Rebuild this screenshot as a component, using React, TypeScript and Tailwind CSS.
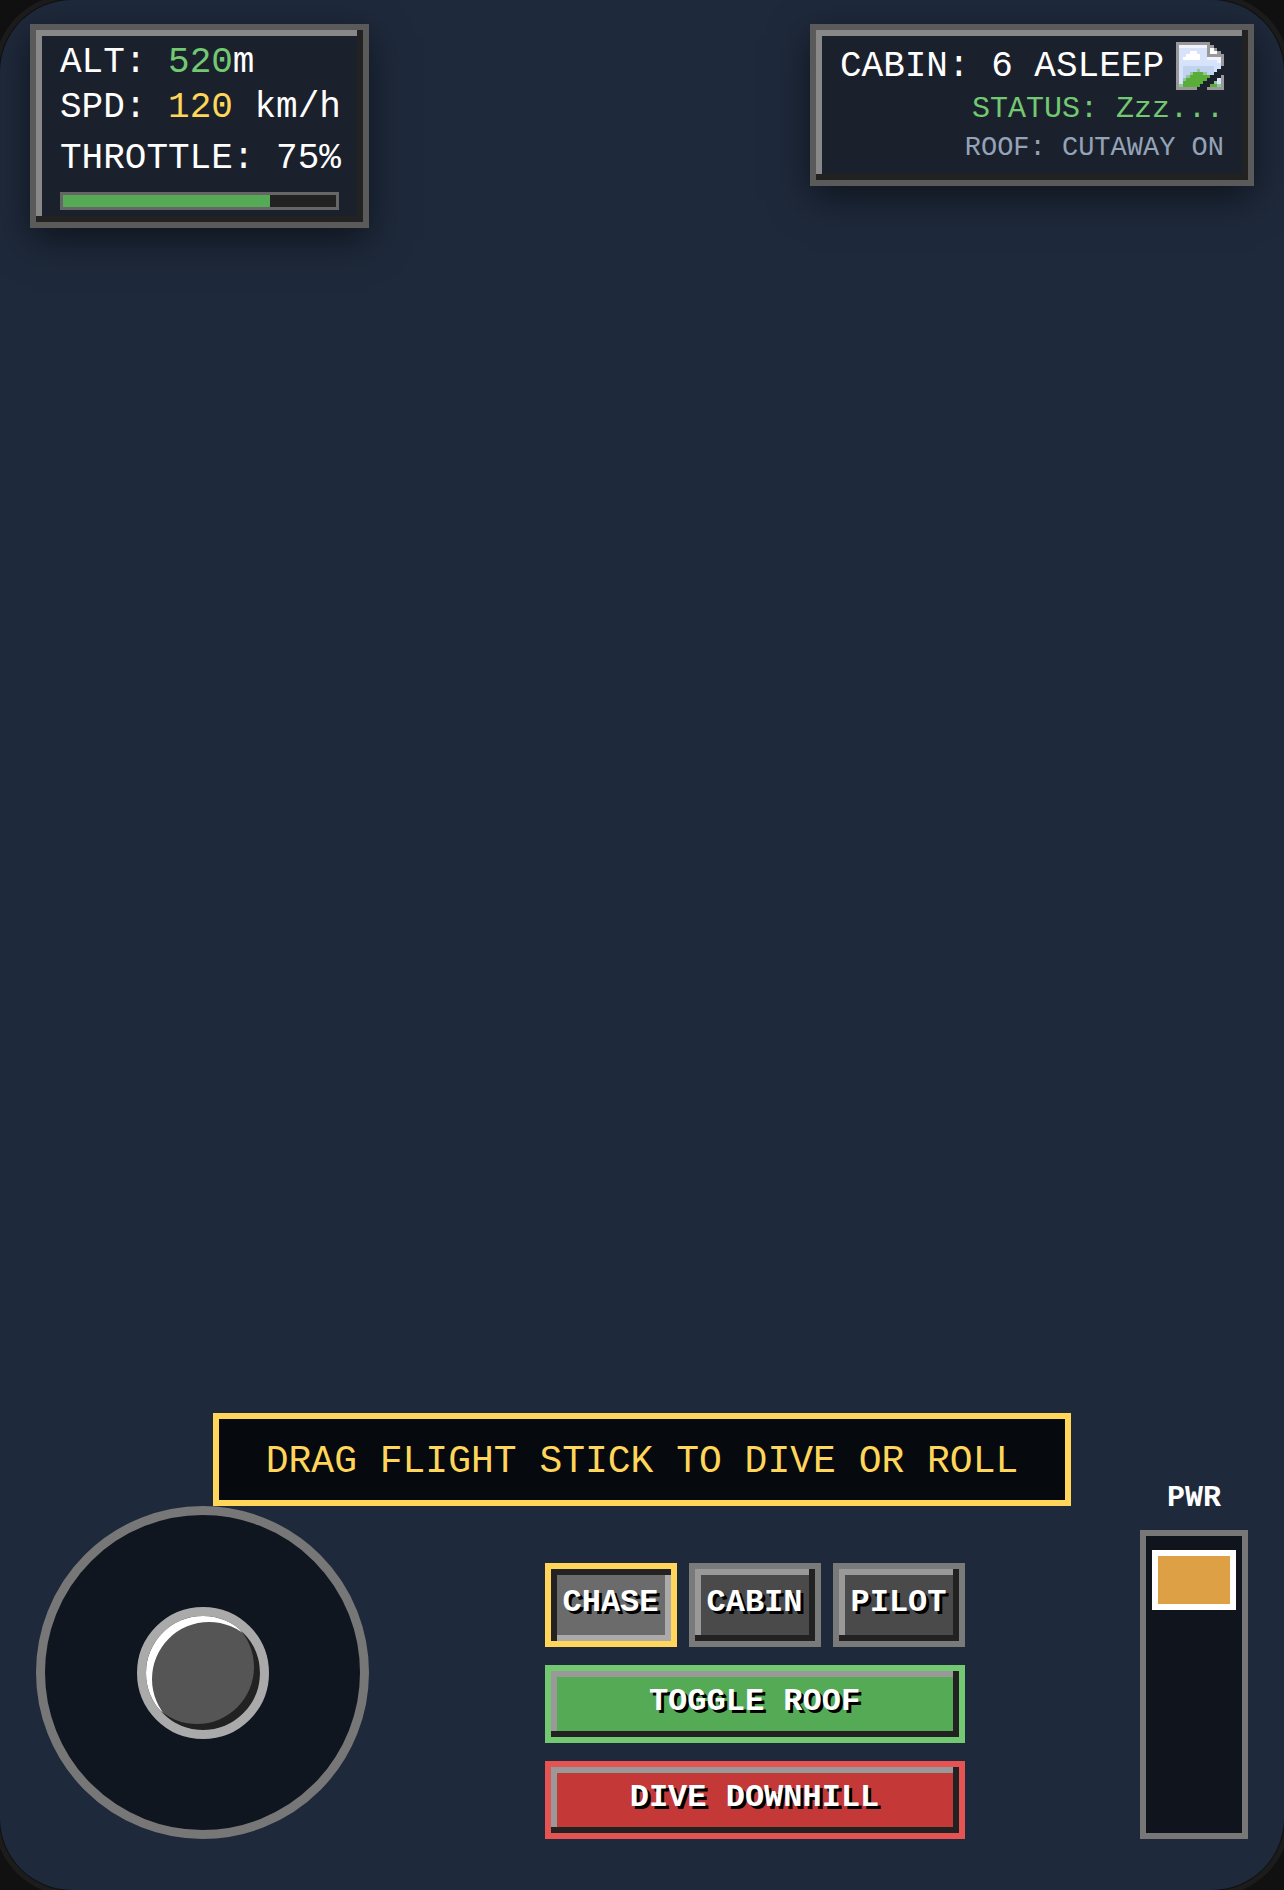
import { useState } from "react";

type View = "CHASE" | "CABIN" | "PILOT";

const VIEWS: View[] = ["CHASE", "CABIN", "PILOT"];

// Missing-picture sprite, one character per pixel (14 x 16).
const SPRITE = [
  "gggggggggg....",
  "gaaaaaaaagg...",
  "gbbbbbbbbgwg..",
  "gbbbwwbbbgwwg.",
  "gbbwwwwbbggggg",
  "gbwwwwwbbaaaag",
  "gbbbbbbbbbbbag",
  "gbbbbbbbbbbbbg",
  "gbcccccccccbb.",
  "gbcccclccccb..",
  "gbcclGGGlcc...",
  "gbclGGGGGG...g",
  "gblGGGGGG...bg",
  "gbGGGGGG...lbg",
  "glGGGGG...GGlg",
  "gggggg...ggggg"
];

const SPRITE_COLORS: Record<string, string> = {
  g: "#999999",
  w: "#ffffff",
  a: "#f0f4fe",
  b: "#d6e3fb",
  c: "#c2d3f1",
  G: "#5aad38",
  l: "#94c49a"
};

// The dark edge comes first so it wins in the corners.
const RAISED = "shadow-[inset_-6px_-6px_0_#222,inset_6px_6px_0_#999]";
const PRESSED = "shadow-[inset_6px_6px_0_#222,inset_-6px_-6px_0_#aaa]";
const PANEL =
  "border-[6px] border-[#5a5a5a] bg-[#1b212c] px-6 pb-3 text-[36px] leading-[45px] text-white whitespace-nowrap shadow-[inset_-6px_-6px_0_#222,inset_6px_6px_0_#888,0_12px_36px_rgba(0,0,0,0.5)]";
const BUTTON =
  "border-[6px] pb-1 text-[32px] leading-9 font-bold text-white [text-shadow:3px_3px_0_#000]";

function PassengerSprite() {
  return (
    <svg
      className="size-12"
      viewBox="0 0 14 16"
      preserveAspectRatio="none"
      shapeRendering="crispEdges"
      role="img"
      aria-label="Passengers"
    >
      {SPRITE.flatMap((row, y) =>
        row.split("").map((pixel, x) =>
          pixel === "." ? null : (
            <rect key={`${x}-${y}`} x={x} y={y} width={1} height={1} fill={SPRITE_COLORS[pixel]} />
          )
        )
      )}
    </svg>
  );
}

function FlightPanel({ throttle, fill }: { throttle: number; fill: number }) {
  return (
    <section className={`${PANEL} w-[339px] pt-[10px]`}>
      <p>
        ALT: <span className="text-[#72c972]">520</span>m
      </p>
      <p>
        SPD: <span className="text-[#ffd65a]">120</span> km/h
      </p>
      <p className="mt-1.5">THROTTLE: {throttle}%</p>
      <div className="mt-[11px] h-[18px] border-[3px] border-[#666] bg-[#222]">
        <div className="h-full bg-[#55aa55]" style={{ width: `${fill}%` }} />
      </div>
    </section>
  );
}

function CabinPanel({ roofOpen }: { roofOpen: boolean }) {
  return (
    <section className={`${PANEL} pt-3 text-right`}>
      <div className="flex items-center justify-end gap-3">
        <p>CABIN: 6 ASLEEP</p>
        <PassengerSprite />
      </div>
      <p className="text-[30px] leading-[39px] text-[#72c972]">STATUS: Zzz...</p>
      <p className="text-[27px] leading-[39px] text-[#94a3b8]">
        ROOF: {roofOpen ? "CUTAWAY ON" : "CUTAWAY OFF"}
      </p>
    </section>
  );
}

function FlightStick() {
  return (
    <div className="flex size-[333px] items-center justify-center rounded-full border-[9px] border-[#777] bg-[#0f161f]">
      <button
        type="button"
        aria-label="Flight stick"
        className="size-[132px] rounded-full border-[9px] border-[#aaa] bg-[#555] shadow-[inset_-6px_-6px_0_#222,inset_6px_6px_0_#fff]"
      />
    </div>
  );
}

export default function App() {
  const [view, setView] = useState<View>("CHASE");
  const [roofOpen, setRoofOpen] = useState(true);
  const [power, setPower] = useState(94);

  return (
    <div className="flex min-h-screen overflow-hidden bg-[#111] font-['Liberation_Mono',monospace]">
      <main className="flex flex-1 flex-col justify-between rounded-[72px] bg-[#1e293b] shadow-[0_0_0_1px_#111,0_0_0_6px_#1c1c1c]">
        <header className="flex items-start justify-between px-[30px] pt-6">
          <FlightPanel throttle={75} fill={76} />
          <CabinPanel roofOpen={roofOpen} />
        </header>

        <footer className="flex flex-col">
          <p className="z-10 -mb-[26px] self-center border-[6px] border-[#ffd65a] bg-[#060a0e] px-[47px] pt-5 pb-4 text-[38px] leading-[45px] text-[#ffd65a]">
            DRAG FLIGHT STICK TO DIVE OR ROLL
          </p>

          <div className="flex items-end justify-between px-9 pb-[51px]">
            <FlightStick />

            <div className="flex w-[420px] flex-col gap-[18px]">
              <div className="grid grid-cols-3 gap-3">
                {VIEWS.map((name) => (
                  <button
                    key={name}
                    type="button"
                    onClick={() => setView(name)}
                    className={`${BUTTON} h-[84px] ${
                      view === name
                        ? `border-[#ffd65a] bg-[#6b6b6b] ${PRESSED}`
                        : `border-[#7a7a7a] bg-[#4a4a4a] ${RAISED}`
                    }`}
                  >
                    {name}
                  </button>
                ))}
              </div>
              <button
                type="button"
                onClick={() => setRoofOpen(!roofOpen)}
                className={`${BUTTON} ${RAISED} h-[78px] border-[#72c972] bg-[#55aa55]`}
              >
                TOGGLE ROOF
              </button>
              <button
                type="button"
                className={`${BUTTON} ${RAISED} h-[78px] border-[#e65353] bg-[#c43838]`}
              >
                DIVE DOWNHILL
              </button>
            </div>

            <div className="flex flex-col items-center gap-[14px]">
              <label htmlFor="power" className="text-[30px] leading-9 font-bold text-white">
                PWR
              </label>
              <input
                id="power"
                type="range"
                min={0}
                max={100}
                value={power}
                onChange={(e) => setPower(Number(e.target.value))}
                className="h-[309px] w-[108px] appearance-none border-[6px] border-[#777] bg-[#10151d] [direction:rtl] [writing-mode:vertical-lr] [&::-webkit-slider-thumb]:h-[60px] [&::-webkit-slider-thumb]:w-[84px] [&::-webkit-slider-thumb]:appearance-none [&::-webkit-slider-thumb]:border-[6px] [&::-webkit-slider-thumb]:border-white [&::-webkit-slider-thumb]:bg-[#dda044]"
              />
            </div>
          </div>
        </footer>
      </main>
    </div>
  );
}
